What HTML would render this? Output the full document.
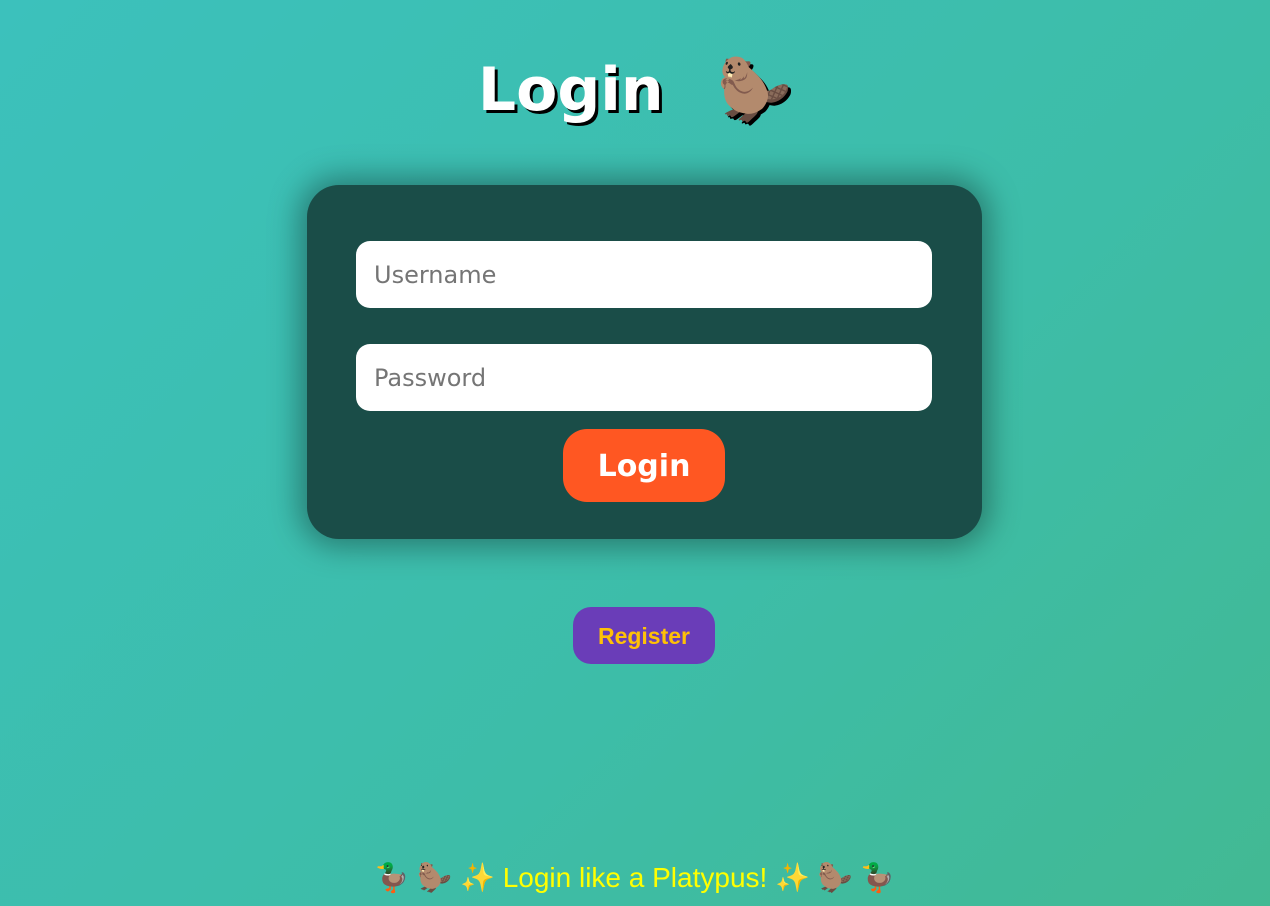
<!DOCTYPE html>
<html><head><meta charset="utf-8"><style>
html,body{margin:0;padding:0;}
body{width:1270px;height:906px;overflow:hidden;position:relative;
background:linear-gradient(135deg,#3cc1bc 0%,#3dbda8 60%,#42b993 100%);
font-family:"Comic Sans MS","Liberation Sans","DejaVu Sans",sans-serif;}
h1{position:absolute;left:0;width:1270px;top:48px;margin:0;text-align:center;color:#fff;font-size:60px;font-weight:bold;
text-shadow:3px 3px 0 #000;line-height:84px;font-family:"DejaVu Sans",sans-serif;word-spacing:6px;}
.card{position:absolute;left:307px;top:185px;width:675px;height:354px;background:#1a4d48;border-radius:32px;
box-shadow:0 0 30px 8px rgba(0,0,0,0.35);}
.in{position:absolute;left:49px;width:576px;height:67px;background:#fff;border-radius:14px;box-sizing:border-box;padding-left:18px;
font-family:"DejaVu Sans","Liberation Sans",sans-serif;font-size:24px;line-height:69px;color:#757575;}
.btn{position:absolute;left:256px;top:244px;width:162px;height:73px;background:#ff5722;border-radius:24px;color:#fff;
font-family:"DejaVu Sans",sans-serif;font-weight:bold;font-size:30px;line-height:76px;text-align:center;}
.reg{position:absolute;left:573px;top:607px;width:142px;height:57px;background:#6a3db8;border-radius:18px;color:#ffc107;
font-weight:bold;font-size:23px;line-height:59px;text-align:center;}
.foot{position:absolute;left:0;width:1270px;top:858px;text-align:center;color:#ffff00;font-size:28px;line-height:40px;}
</style></head><body>
<h1>Login&nbsp; 🦫</h1>
<div class="card">
<div class="in" style="top:56px">Username</div>
<div class="in" style="top:159px">Password</div>
<div class="btn">Login</div>
</div>
<div class="reg">Register</div>
<div class="foot">🦆 🦫 ✨ Login like a Platypus! ✨ 🦫 🦆</div>
</body></html>
